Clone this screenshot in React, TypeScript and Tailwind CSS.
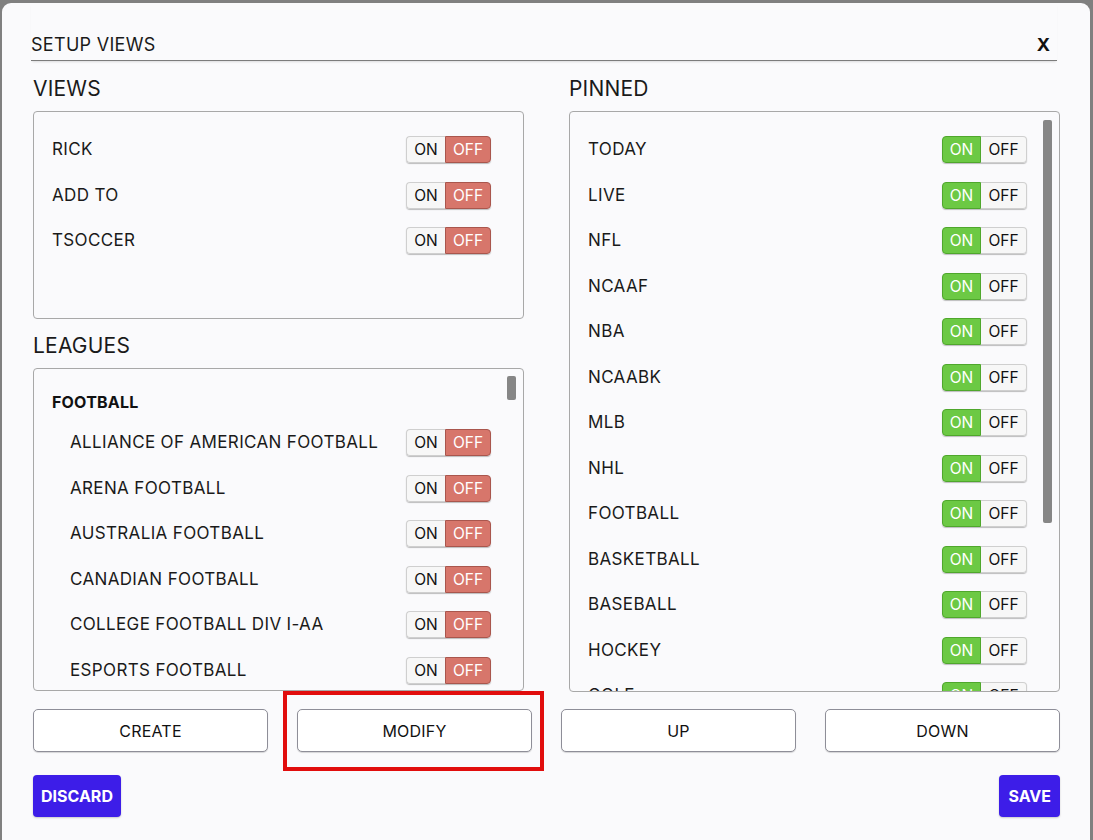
import React from "react";

type Item = { label: string; on: boolean };

const views: Item[] = [
  { label: "RICK", on: false },
  { label: "ADD TO", on: false },
  { label: "TSOCCER", on: false },
];

const football: Item[] = [
  "ALLIANCE OF AMERICAN FOOTBALL",
  "ARENA FOOTBALL",
  "AUSTRALIA FOOTBALL",
  "CANADIAN FOOTBALL",
  "COLLEGE FOOTBALL DIV I-AA",
  "ESPORTS FOOTBALL",
].map((label) => ({ label, on: false }));

const pinned: Item[] = [
  "TODAY",
  "LIVE",
  "NFL",
  "NCAAF",
  "NBA",
  "NCAABK",
  "MLB",
  "NHL",
  "FOOTBALL",
  "BASKETBALL",
  "BASEBALL",
  "HOCKEY",
  "GOLF",
].map((label) => ({ label, on: true }));

// ON / OFF segmented switch
const Toggle = ({ on }: { on: boolean }) => (
  <div className="flex h-[27px] rounded-[4px] shadow-[0_1px_1px_rgba(0,0,0,0.25)] text-[15.5px] leading-none">
    <div
      className={
        on
          ? "w-[39px] flex items-center justify-center rounded-l-[4px] border border-[#4fa72c] bg-[#6cc944] text-white"
          : "w-[39px] flex items-center justify-center rounded-l-[4px] border border-r-0 border-[#cfcfcf] bg-[#f7f7f7] text-[#111]"
      }
    >
      ON
    </div>
    <div
      className={
        on
          ? "w-[46px] flex items-center justify-center rounded-r-[4px] border border-l-0 border-[#cfcfcf] bg-[#f7f7f7] text-[#111]"
          : "w-[46px] flex items-center justify-center rounded-r-[4px] border border-[#a9564d] bg-[#d7766b] text-white"
      }
    >
      OFF
    </div>
  </div>
);

const Row = ({ item, indent }: { item: Item; indent?: boolean }) => (
  <div
    className={`h-[45.5px] shrink-0 flex items-center justify-between pr-[32px] ${
      indent ? "pl-[36px]" : "pl-[18px]"
    }`}
  >
    <span className="text-[17px] tracking-[0.35px] text-[#1a1a1a]">{item.label}</span>
    <Toggle on={item.on} />
  </div>
);

const Thumb = ({ top, height }: { top: string; height: string }) => (
  <div className={`absolute right-[7px] w-[9px] rounded-[2px] bg-[#868686] ${top} ${height}`} />
);

const Heading = ({ children }: { children: React.ReactNode }) => (
  <h2 className="h-[44px] flex items-center text-[21px] text-[#1a1a1a] tracking-[0.2px]">{children}</h2>
);

const OutlineButton = ({ label, boxed }: { label: string; boxed?: boolean }) => (
  <div className="relative">
    <button className="w-full h-[43px] rounded-[5px] border border-[#8e8e98] bg-white text-[16px] tracking-[0.2px] text-[#111] shadow-[0_1px_1px_rgba(0,0,0,0.15)]">
      {label}
    </button>
    {boxed && (
      <div className="absolute -left-[14px] -right-[12px] -top-[18px] -bottom-[19px] border-4 border-[#e10d0d] pointer-events-none" />
    )}
  </div>
);

export default function App() {
  return (
    <div
      className="w-[1093px] h-[840px] overflow-hidden bg-[#808080] pl-[2px] pt-[3px]"
      style={{ fontFamily: "Inter, 'Noto Sans', sans-serif" }}
    >
      <div className="w-[1088px] h-[860px] rounded-[9px] bg-[#fafafc]">
        {/* header */}
        <div className="ml-[29px] mr-[33px] pt-[31px] flex items-end justify-between border-b border-[#7c7c7c] pb-[4px] shadow-[0_2px_2px_-1px_rgba(0,0,0,0.12)]">
          <span className="text-[18px] tracking-[0.3px] text-[#1a1a1a] leading-[22px]">SETUP VIEWS</span>
          <span className="text-[18px] font-bold text-[#111] leading-[22px] mr-[7px]">X</span>
        </div>

        <div className="ml-[31px] mr-[30px] mt-[6px]">
          <div className="grid grid-cols-2 gap-x-[45px]">
            {/* left column */}
            <div className="flex flex-col">
              <Heading>VIEWS</Heading>
              <div className="h-[208px] rounded-[4px] border border-[#a8a8a8] bg-[#fafafc] pt-[15px] flex flex-col">
                {views.map((v) => (
                  <Row key={v.label} item={v} />
                ))}
              </div>
              <div className="h-[5px]" />
              <Heading>LEAGUES</Heading>
              <div className="relative h-[323px] overflow-hidden rounded-[4px] border border-[#a8a8a8] bg-[#fafafc] pt-[15px] flex flex-col">
                <div className="h-[36px] shrink-0 flex items-center pl-[18px] text-[16px] tracking-[0.2px] font-bold text-[#111]">
                  FOOTBALL
                </div>
                {football.map((f) => (
                  <Row key={f.label} item={f} indent />
                ))}
                <Thumb top="top-[7px]" height="h-[24px]" />
              </div>
            </div>

            {/* right column */}
            <div className="flex flex-col">
              <Heading>PINNED</Heading>
              <div className="relative h-[581px] overflow-hidden rounded-[4px] border border-[#a8a8a8] bg-[#fafafc] pt-[15px] flex flex-col">
                {pinned.map((p) => (
                  <Row key={p.label} item={p} />
                ))}
                <Thumb top="top-[8px]" height="h-[403px]" />
              </div>
            </div>
          </div>

          {/* actions */}
          <div className="mt-[17px] grid grid-cols-4 gap-x-[29px]">
            <OutlineButton label="CREATE" />
            <OutlineButton label="MODIFY" boxed />
            <OutlineButton label="UP" />
            <OutlineButton label="DOWN" />
          </div>

          <div className="mt-[23px] flex justify-between">
            <button className="h-[42px] px-[8px] rounded-[4px] bg-[#3d1de8] text-white text-[16px] font-bold shadow-[0_1px_2px_rgba(0,0,0,0.2)]">
              DISCARD
            </button>
            <button className="h-[42px] px-[9px] rounded-[4px] bg-[#3d1de8] text-white text-[16px] font-bold shadow-[0_1px_2px_rgba(0,0,0,0.2)]">
              SAVE
            </button>
          </div>
        </div>
      </div>
    </div>
  );
}
